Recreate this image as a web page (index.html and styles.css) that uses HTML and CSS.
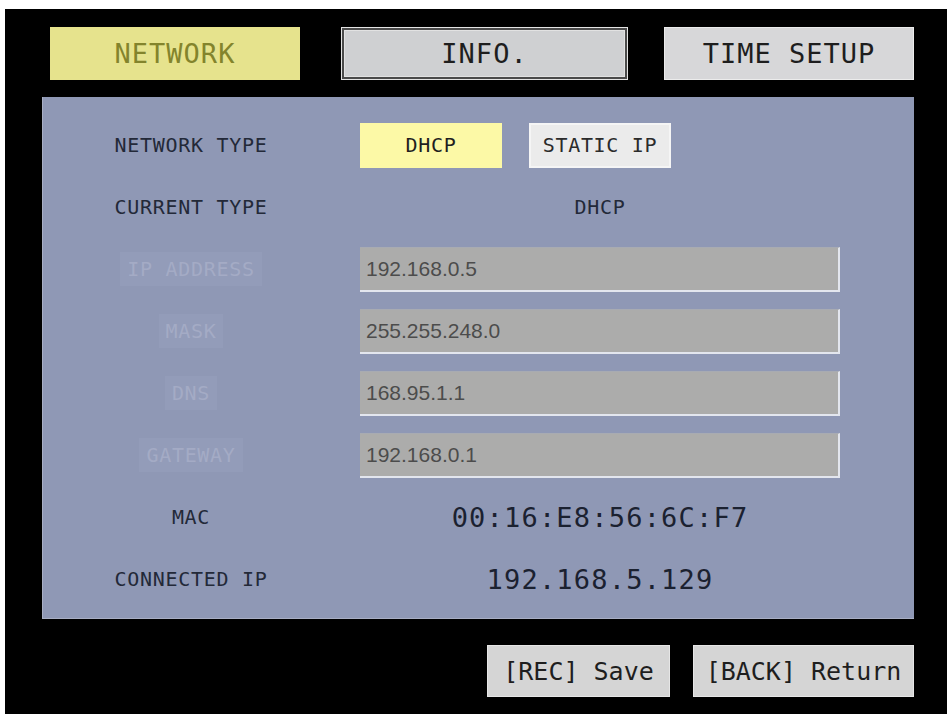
FILE: index.html
```html
<!DOCTYPE html>
<html lang="en">
<head>
    <meta charset="UTF-8">
    <meta name="viewport" content="width=device-width, initial-scale=1">
    <title>Network Setup</title>
    <link rel="stylesheet" href="styles.css">
</head>
<body>
    <div class="screen">
        <div class="tabs">
            <div class="tab tab-active">NETWORK</div>
            <div class="tab tab-info">INFO.</div>
            <div class="tab tab-time">TIME SETUP</div>
        </div>

        <div class="panel">
            <div class="row">
                <div class="label">NETWORK TYPE</div>
                <div class="choices">
                    <button class="choice choice-on">DHCP</button>
                    <button class="choice">STATIC IP</button>
                </div>
            </div>

            <div class="row">
                <div class="label">CURRENT TYPE</div>
                <div class="value value-small">DHCP</div>
            </div>

            <!-- campos deshabilitados en modo DHCP -->
            <div class="row">
                <div class="label"><span class="label-off">IP ADDRESS</span></div>
                <input class="field" type="text" value="192.168.0.5" disabled>
            </div>

            <div class="row">
                <div class="label"><span class="label-off">MASK</span></div>
                <input class="field" type="text" value="255.255.248.0" disabled>
            </div>

            <div class="row">
                <div class="label"><span class="label-off">DNS</span></div>
                <input class="field" type="text" value="168.95.1.1" disabled>
            </div>

            <div class="row">
                <div class="label"><span class="label-off">GATEWAY</span></div>
                <input class="field" type="text" value="192.168.0.1" disabled>
            </div>

            <div class="row">
                <div class="label">MAC</div>
                <div class="value">00:16:E8:56:6C:F7</div>
            </div>

            <div class="row">
                <div class="label">CONNECTED IP</div>
                <div class="value">192.168.5.129</div>
            </div>
        </div>

        <div class="actions">
            <button class="action action-save">[REC] Save</button>
            <button class="action action-back">[BACK] Return</button>
        </div>
    </div>
</body>
</html>
```

FILE: styles.css
```css
body {
    margin: 0;
    padding: 0;
    background-color: #fff;
    font-family: "DejaVu Sans Mono", "Liberation Mono", monospace;
}
.screen {
    box-sizing: border-box;
    width: 942px;
    height: 705px;
    margin: 9px 0 0 5px;
    padding: 18px 33px 17px 37px;
    background-color: #000;
}
.tabs {
    display: flex;
    height: 53px;
    padding-left: 8px;
    margin-bottom: 17px;
}
.tab {
    box-sizing: border-box;
    display: flex;
    align-items: center;
    justify-content: center;
    height: 53px;
    font-size: 27px;
    letter-spacing: 1px;
    color: #1e1e1e;
}
.tab-active {
    width: 250px;
    background-color: #e6e38d;
    color: #83842c;
}
.tab-info {
    width: 287px;
    margin-left: 41px;
    background-color: #cfd0d2;
    border: 1px solid #e4e4e4;
    box-shadow: inset 0 0 0 2px #4a4a4a, inset 0 0 0 3px #e2e2e2;
}
.tab-time {
    width: 250px;
    margin-left: auto;
    background-color: #d7d7d9;
    border: 1px solid #ececec;
}
.panel {
    box-sizing: border-box;
    height: 522px;
    padding-top: 17px;
    background-color: #8f98b5;
    border-left: 1px solid #a9afc4;
    border-bottom: 1px solid #a9afc4;
}
.row {
    display: grid;
    grid-template-columns: 296px 480px;
    column-gap: 21px;
    align-items: center;
    height: 62px;
}
.label {
    text-align: center;
    font-size: 20px;
    letter-spacing: 0.7px;
    color: #232938;
}
.label-off {
    display: inline-block;
    padding: 5px 7px;
    background-color: #939cb9;
    color: #a4abc5;
}
.choices {
    display: flex;
    gap: 27px;
}
.choice {
    width: 142px;
    height: 45px;
    padding: 0;
    font-family: "DejaVu Sans Mono", "Liberation Mono", monospace;
    font-size: 20px;
    letter-spacing: 0.7px;
    color: #2b2b2b;
    background-color: #ebebeb;
    border: 2px solid #f5f5f5;
}
.choice-on {
    background-color: #fcf9a6;
    border-color: #fcf9a6;
    color: #1f1f1f;
}
.value {
    text-align: center;
    font-size: 27px;
    letter-spacing: 1.2px;
    color: #1b2130;
}
.value-small {
    font-size: 20px;
    letter-spacing: 0.7px;
    color: #232938;
}
.field {
    box-sizing: border-box;
    width: 480px;
    height: 45px;
    padding: 0 6px;
    font-family: "Liberation Sans", Arial, sans-serif;
    font-size: 21px;
    color: #4c4c4c;
    background-color: #acacab;
    border: none;
    border-right: 2px solid #e3e6ee;
    border-bottom: 2px solid #e3e6ee;
    border-top: 1px solid #a8abb2;
    -webkit-text-fill-color: #4c4c4c;
}
.actions {
    display: flex;
    justify-content: flex-end;
    gap: 23px;
    height: 52px;
    margin-top: 26px;
}
.action {
    height: 52px;
    padding: 0;
    font-family: "DejaVu Sans Mono", "Liberation Mono", monospace;
    font-size: 25px;
    color: #1e1e1e;
    background-color: #d5d5d5;
    border: 1px solid #e6e6e6;
}
.action-save {
    width: 183px;
}
.action-back {
    width: 221px;
}
```
